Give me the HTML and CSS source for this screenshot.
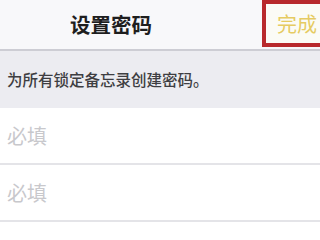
FILE: index.html
```html
<!DOCTYPE html>
<html lang="zh">
<head>
<meta charset="utf-8">
<link rel="stylesheet" href="styles.css">
</head>
<body>
<div class="screen">
  <header class="nav">
    <div class="title">设置密码</div>
    <div class="done">完成</div>
  </header>
  <div class="desc">为所有锁定备忘录创建密码。</div>
  <div class="rows">
    <div class="row">必填</div>
    <div class="row">必填</div>
    <div class="row">必填</div>
  </div>
</div>
</body>
</html>
```
FILE: styles.css
```css
html, body {
  margin: 0;
  padding: 0;
  background: #ffffff;
}
.screen {
  width: 320px;
  height: 240px;
  overflow: hidden;
  font-family: "Noto Sans CJK SC", "Noto Sans", sans-serif;
  display: flex;
  flex-direction: column;
}
.nav {
  height: 49px;
  flex: none;
  background: #f8f8fa;
  border-bottom: 2px solid #cdcdd4;
  display: flex;
  align-items: center;
}
.title {
  margin-left: 70px;
  font-size: 20.5px;
  font-weight: 700;
  color: #1e1e1e;
  line-height: 1;
}
.done {
  margin-left: auto;
  margin-right: -14px;
  box-sizing: border-box;
  height: 47px;
  margin-top: -2px;
  border: 4px solid #b8292c;
  padding: 0 13px 0 11px;
  display: flex;
  align-items: center;
  font-size: 20px;
  color: #e6cb62;
  background: #fbfbf6;
  line-height: 1;
}
.desc {
  height: 57px;
  flex: none;
  background: #ececf1;
  display: flex;
  align-items: center;
  padding-left: 7px;
  font-size: 15.5px;
  font-weight: 500;
  color: #3e3e42;
  line-height: 1;
}
.rows {
  background: #ffffff;
}
.row {
  height: 55px;
  border-bottom: 2px solid #e4e4e8;
  display: flex;
  align-items: center;
  padding-left: 7px;
  font-size: 20px;
  color: #c8c8cc;
  line-height: 1;
}
```
